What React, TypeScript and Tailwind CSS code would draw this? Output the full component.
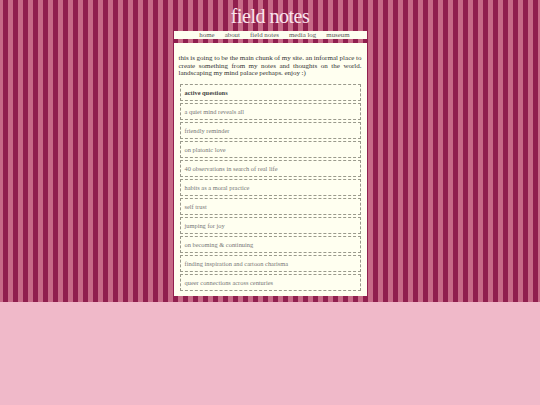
import React from 'react';

const navLinks = ['home', 'about', 'field notes', 'media log', 'museum'];

const notes = [
  'a quiet mind reveals all',
  'friendly reminder',
  'on platonic love',
  '40 observations in search of real life',
  'habits as a moral practice',
  'self trust',
  'jumping for joy',
  'on becoming & continuing',
  'finding inspiration and cartoon charisma',
  'queer connections across centuries',
];

const App: React.FC = () => {
  return (
    <div className="min-h-[405px] bg-[#f0b9c9] font-['Liberation_Serif','Times_New_Roman',serif]">
      <div className="h-[302px] bg-[repeating-linear-gradient(90deg,#c76a87_0px,#c76a87_3px,#901f4e_3px,#901f4e_8px,#c76a87_8px,#c76a87_10px)] pt-[2px]">
        <div className="w-[193px] mx-auto">
          <h1 className="text-center text-[20px] leading-[29px] tracking-[-0.5px] text-[#fbe4ec]">field notes</h1>

          <nav className="h-[8px] bg-[#fdfdf0] flex justify-center gap-[10px] pl-[9px] text-[6.9px] leading-[8px] text-[#555]">
            {navLinks.map((link) => (
              <a key={link} href="#">{link}</a>
            ))}
          </nav>

          <main className="mt-[4px] bg-[#fffff0] px-[6px] pt-[12px] pb-[5px]">
            <p className="-mx-[1px] text-[7px] leading-[7.7px] text-justify text-[#333] [word-spacing:-0.2px]">
              this is going to be the main chunk of my site. an informal place to create something from my notes and thoughts on the world. landscaping my mind palace perhaps. enjoy :)
            </p>

            <ul className="mt-[6px] flex flex-col gap-[2px]">
              <li className="h-[17px] flex items-center px-[4px] border border-dashed border-[#9a9a8c] text-[6.4px] font-bold text-[#444]">
                active questions
              </li>
              {notes.map((note) => (
                <li key={note} className="h-[17px] flex items-center px-[4px] border border-dashed border-[#9a9a8c] text-[6.4px] text-[#777]">
                  {note}
                </li>
              ))}
            </ul>
          </main>
        </div>
      </div>
    </div>
  );
};

export default App;
